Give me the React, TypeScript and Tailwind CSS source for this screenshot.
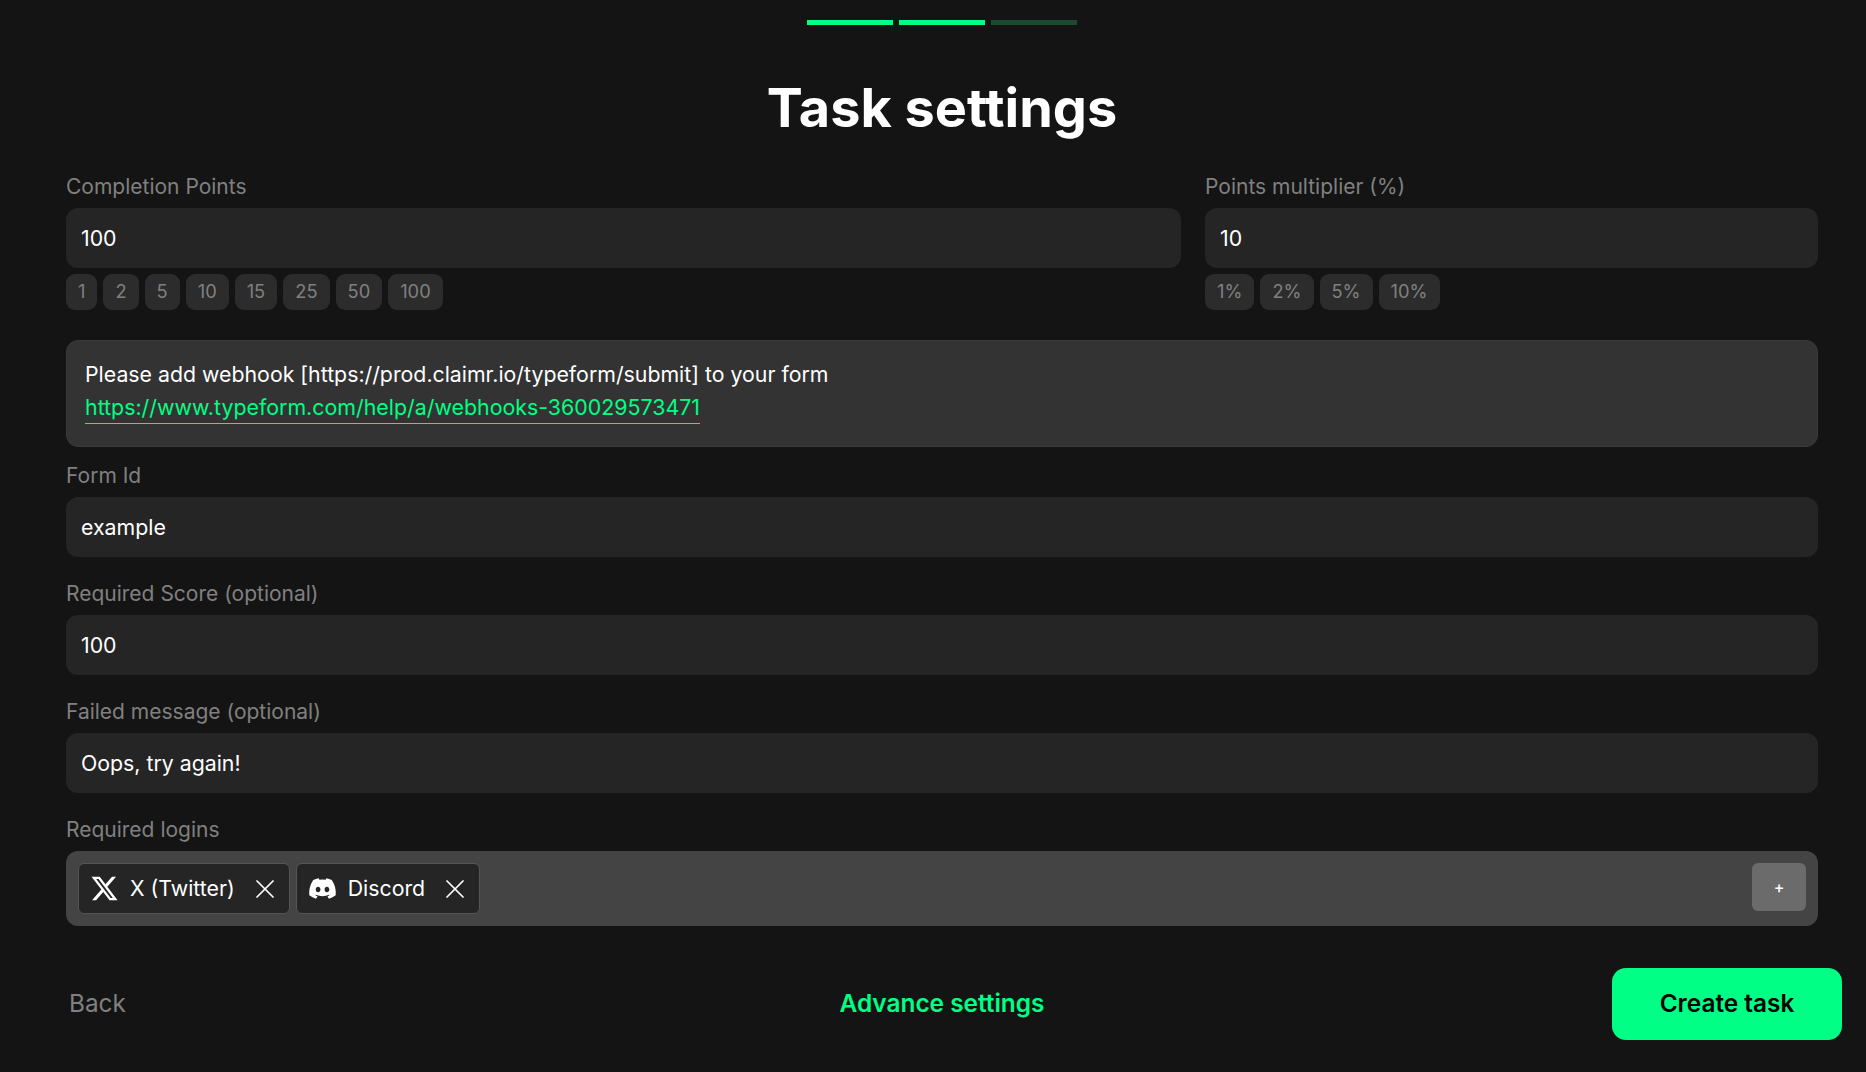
import { X } from 'lucide-react'
import { FaDiscord, FaXTwitter } from 'react-icons/fa6'

const pointPresets = ['1', '2', '5', '10', '15', '25', '50', '100']
const multiplierPresets = ['1%', '2%', '5%', '10%']

const Label = ({ children }: { children: React.ReactNode }) => (
  <label className="block h-[24px] mb-[9px] text-[21px] leading-[24px] text-[#808080]">{children}</label>
)

const TextInput = ({ value }: { value: string }) => (
  <input
    readOnly
    defaultValue={value}
    className="block w-full h-[60px] px-[15px] rounded-[12px] bg-[#252525] text-[21.3px] text-white outline-none"
  />
)

const Presets = ({ items }: { items: string[] }) => (
  <div className="flex gap-[6px] mt-[6px]">
    {items.map((item) => (
      <button
        key={item}
        className="h-[36px] px-[12px] pb-[1px] rounded-[9px] bg-[#2c2c2c] text-[18.3px] leading-[35px] text-[#808080]"
      >
        {item}
      </button>
    ))}
  </div>
)

const Field = ({ label, value }: { label: string; value: string }) => (
  <div className="mt-[25px]">
    <Label>{label}</Label>
    <TextInput value={value} />
  </div>
)

const LoginTag = ({ icon, name }: { icon: React.ReactNode; name: string }) => (
  <div className="flex items-center h-[51px] pl-[11px] pr-[8px] rounded-[6px] bg-[#252525] border border-[#555555] text-[21.3px] text-white">
    {icon}
    <span className="ml-[11px] mr-[14px] pt-[1px]">{name}</span>
    <X className="w-[32px] h-[32px]" strokeWidth={1.3} />
  </div>
)

export default function App() {
  return (
    <div className="min-h-[1072px] bg-[#141414] pl-[42px] pr-[24px] pt-[20px] font-['Inter',sans-serif]">
      <div className="flex justify-center gap-[6px]">
        <div className="w-[86px] h-[5px] bg-[#00ff85]" />
        <div className="w-[86px] h-[5px] bg-[#00ff85]" />
        <div className="w-[86px] h-[5px] bg-[#1c4a2f]" />
      </div>

      <h1 className="mt-[49px] h-[68px] text-center text-[54px] leading-[68px] font-bold text-white">Task settings</h1>

      <div className="px-[24px] mt-[33px]">
        <div className="flex gap-[24px]">
          <div className="flex-1">
            <Label>Completion Points</Label>
            <TextInput value="100" />
            <Presets items={pointPresets} />
          </div>
          <div className="w-[613px]">
            <Label>Points multiplier (%)</Label>
            <TextInput value="10" />
            <Presets items={multiplierPresets} />
          </div>
        </div>

        <div className="mt-[30px] h-[107px] px-[18px] pt-[17px] rounded-[12px] bg-[#333333] border border-[#3a3a3a] text-[21.3px] leading-[33px] text-white">
          <div>Please add webhook [https://prod.claimr.io/typeform/submit] to your form</div>
          <a className="inline-block leading-[32px] text-[21.36px] text-[#00ff85] border-b border-[#00ff85]">
            https://www.typeform.com/help/a/webhooks-360029573471
          </a>
        </div>

        <div className="mt-[17px]">
          <Label>Form Id</Label>
          <TextInput value="example" />
        </div>
        <Field label="Required Score (optional)" value="100" />
        <Field label="Failed message (optional)" value="Oops, try again!" />

        <div className="mt-[25px]">
          <Label>Required logins</Label>
          <div className="flex items-start gap-[6px] h-[75px] pt-[12px] px-[12px] rounded-[12px] bg-[#444444]">
            <LoginTag icon={<FaXTwitter className="w-[29px] h-[29px]" />} name="X (Twitter)" />
            <LoginTag icon={<FaDiscord className="w-[29px] h-[29px]" />} name="Discord" />
            <button className="ml-auto w-[54px] h-[48px] rounded-[6px] bg-[#6b6b6b] text-[16px] font-medium text-white">
              +
            </button>
          </div>
        </div>
      </div>

      <div className="grid grid-cols-[1fr_auto_1fr] items-center mt-[42px]">
        <button className="justify-self-start ml-[27px] pb-[1px] text-[24.3px] text-[#808080]">Back</button>
        <button className="pb-[1px] text-[24.4px] font-semibold text-[#00ff85]">Advance settings</button>
        <button className="justify-self-end w-[230px] h-[72px] pb-[1px] rounded-[14px] bg-[#00ff85] text-[24.4px] font-semibold text-black">
          Create task
        </button>
      </div>
    </div>
  )
}
